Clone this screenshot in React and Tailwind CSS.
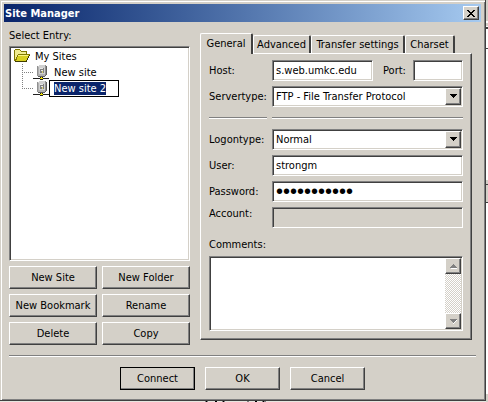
import { useEffect, useRef } from "react";

const sunken =
  "border border-t-[#808080] border-l-[#808080] border-r-white border-b-white shadow-[inset_1px_1px_0_#404040,inset_-1px_-1px_0_#d4d0c8]";
const raised =
  "border border-t-white border-l-white border-r-[#404040] border-b-[#404040] shadow-[inset_-1px_-1px_0_#808080] bg-[#d4d0c8]";
const field = `${sunken} block h-[21px] w-full min-w-0 rounded-none bg-white px-[3px] outline-none`;

function Button({ children, className = "" }) {
  return (
    <button type="button" className={`${raised} h-[23px] text-center leading-[20px] ${className}`}>
      {children}
    </button>
  );
}

function Rule({ className = "" }) {
  return <div className={`h-[2px] border-t border-b border-t-[#808080] border-b-white ${className}`} />;
}

function Arrow({ up = false, color = "#000" }) {
  return (
    <svg width="7" height="5" viewBox="0 0 7 5" shapeRendering="crispEdges" aria-hidden="true">
      {color !== "#000" && (
        <path fill="#fff" d={up ? "M1 4h6v1H1z" : "M6 1h1v1H6zM5 2h1v1H5zM4 3h1v1H4zM3 4h1v1H3z"} />
      )}
      <path
        fill={color}
        d={up ? "M3 0h1v1H3zM2 1h3v1H2zM1 2h5v1H1zM0 3h7v1H0z" : "M0 0h7v1H0zM1 1h5v1H1zM2 2h3v1H2zM3 3h1v1H3z"}
      />
    </svg>
  );
}

function Select({ id, value }) {
  return (
    <div className="relative">
      <select id={id} defaultValue={value} className={`${field} appearance-none pr-5`}>
        <option>{value}</option>
      </select>
      <span className={`${raised} pointer-events-none absolute top-[2px] right-[2px] flex h-[17px] w-4 items-center justify-center`}>
        <Arrow />
      </span>
    </div>
  );
}

function FolderIcon() {
  return (
    <svg width="16" height="16" viewBox="0 0 16 16" shapeRendering="crispEdges" aria-hidden="true">
      <path fill="#807800" d="M1 1h5v1h1v1h6v3h3v1h-1v2h-1v2h-1v2h-1v1H1v-1H0V2h1z" />
      <path fill="#f0ec90" d="M1 2h5v1h1v1h5v2H4v1H3v2H2v2H1z" />
      <path fill="#d8d020" d="M4 7h11v1h-1v2h-1v2h-1v1H2v-1h1V9h1z" />
      <path fill="#f8f480" d="M4 7h10v1H4z" />
      <path fill="#403c00" d="M1 13h11v-1h1v-2h1V8h1V7h1v1h-1v2h-1v2h-1v2H1z" />
    </svg>
  );
}

function ServerIcon() {
  return (
    <svg width="16" height="16" viewBox="0 0 16 16" shapeRendering="crispEdges" aria-hidden="true">
      <path fill="#909090" d="M6 1h7v1h1v9h-1v1h-1v1H5v-1H4V2h2z" />
      <path fill="#d0d0d0" d="M6 1h6v1H6zM5 2h7v10H5z" />
      <path fill="#b0b0b0" d="M5 3h1v9H5zM6 10h6v2H6z" />
      <path fill="#606060" d="M13 2h1v9h-1zM12 11h1v1h-1zM5 12h7v1H5z" />
      <path fill="#808080" d="M7 4h4v5H7z" />
      <path fill="#e8e8e8" d="M7 4h3v1H7zM8 6h2v1H8z" />
      <path fill="#d8d070" d="M9 7h1v2H9z" />
      <path fill="#202020" d="M8 13h1v1H8zM0 14h7v1H0zM10 14h6v1h-6zM7 13h1v1H7zM9 13h1v1H9zM7 15h3v1H7z" />
      <path fill="#f0e000" d="M7 14h3v1H7zM8 13h1v1H8z" />
    </svg>
  );
}

function Branch({ last = false }) {
  return (
    <svg width="11" height="16" viewBox="0 0 11 16" shapeRendering="crispEdges" aria-hidden="true">
      <path
        fill="none"
        stroke="#808080"
        strokeDasharray="1 1"
        d={last ? "M0.5 0V8M0 8.5H11" : "M0.5 0V16M0 8.5H11"}
      />
    </svg>
  );
}

function Tree() {
  const edit = useRef(null);
  useEffect(() => {
    edit.current.focus();
    edit.current.select();
  }, []);
  return (
    <div className={`${sunken} h-[215px] bg-white pt-[1px] pl-1`}>
      <div className="flex h-4 items-center gap-[5px]">
        <FolderIcon />
        <span>My Sites</span>
      </div>
      <ul className="pl-2">
        <li className="flex h-4 items-center">
          <Branch />
          <ServerIcon />
          <span className="pl-[5px]">New site</span>
        </li>
        <li className="flex h-4 items-center">
          <Branch last />
          <ServerIcon />
          <input
            ref={edit}
            aria-label="Entry name"
            defaultValue="New site 2"
            className="h-[17px] w-[70px] shrink-0 border border-black bg-white px-1 outline-none selection:bg-[#0a246a] selection:text-white"
          />
        </li>
      </ul>
    </div>
  );
}

const tab =
  "h-[18px] rounded-t-[2px] border-t border-l border-t-white border-l-white border-r-2 border-r-[#404040] leading-[16px]";

function SettingsTabs() {
  return (
    <div className="min-w-0 flex-1">
      <div role="tablist" className="flex h-5 items-end">
        <button
          type="button"
          role="tab"
          aria-selected="true"
          className="relative z-10 -mb-px h-[21px] w-[53px] rounded-t-[2px] border-t border-r-2 border-l border-t-white border-r-[#404040] border-l-white bg-[#d4d0c8] pb-[2px]"
        >
          General
        </button>
        <button type="button" role="tab" className={`${tab} w-[58px]`}>Advanced</button>
        <button type="button" role="tab" className={`${tab} w-[94px]`}>Transfer settings</button>
        <button type="button" role="tab" className={`${tab} w-[50px]`}>Charset</button>
      </div>
      <div role="tabpanel" className={`${raised} px-2 pt-[6px] pb-2`}>
        <div className="grid grid-cols-[58px_1fr] items-center gap-x-[5px] gap-y-[5px]">
          <label htmlFor="host">Host:</label>
          <div className="flex items-center">
            <input id="host" defaultValue="s.web.umkc.edu" className={`${field} flex-1`} />
            <label htmlFor="port" className="w-10 pl-[10px]">Port:</label>
            <input id="port" className={`${field} max-w-[50px]`} />
          </div>
          <label htmlFor="servertype">Servertype:</label>
          <Select id="servertype" value="FTP - File Transfer Protocol" />
          <Rule className="my-[5px]" />
          <Rule className="my-[5px]" />
          <label htmlFor="logontype">Logontype:</label>
          <Select id="logontype" value="Normal" />
          <label htmlFor="user">User:</label>
          <input id="user" defaultValue="strongm" className={field} />
          <label htmlFor="password">Password:</label>
          <input
            id="password"
            type="password"
            defaultValue="abcdefghijk"
            className={`${field} font-['Liberation_Sans',sans-serif] text-[20px] leading-[17px]`}
          />
          <label htmlFor="account" className="self-start">Account:</label>
          <input id="account" disabled className={`${sunken} h-[21px] w-full bg-[#d4d0c8]`} />
        </div>
        <label htmlFor="comments" className="mt-[10px] mb-[5px] block">Comments:</label>
        <div className={`${sunken} flex h-[75px] bg-white p-[1px]`}>
          <textarea id="comments" className="min-w-0 flex-1 resize-none px-1 outline-none" />
          <div className="flex w-4 flex-col bg-[repeating-conic-gradient(#fff_0%_25%,#d4d0c8_0%_50%)] bg-size-[2px_2px]">
            <button type="button" aria-label="Scroll up" className={`${raised} flex h-4 items-center justify-center`}>
              <Arrow up color="#808080" />
            </button>
            <div className="flex-1" />
            <button type="button" aria-label="Scroll down" className={`${raised} flex h-4 items-center justify-center`}>
              <Arrow color="#808080" />
            </button>
          </div>
        </div>
      </div>
    </div>
  );
}

export default function App() {
  return (
    <div className="flex min-h-screen bg-[#e8e6e0] font-['DejaVu_Sans_Condensed','DejaVu_Sans',sans-serif] text-[11px] leading-[13px] text-black">
      <div className="flex min-w-0 flex-1 flex-col">
        <main className="border-r border-b border-[#404040] bg-[#d4d0c8] shadow-[inset_1px_1px_0_#d4d0c8,inset_2px_2px_0_#fff,inset_-1px_-1px_0_#808080]">
          <div className="px-1 pt-1 pb-[10px]">
            <header className="flex h-[18px] items-center justify-between bg-linear-to-r from-[#0a246a] to-[#a6caf0] pr-[2px] pl-[1px]">
              <h1 className="font-bold text-white">Site Manager</h1>
              <button type="button" aria-label="Close" className={`${raised} flex h-[14px] w-4 items-center justify-center`}>
                <svg width="8" height="7" viewBox="0 0 8 7" shapeRendering="crispEdges" aria-hidden="true">
                  <path d="M0 0h2v1H0zM6 0h2v1H6zM1 1h2v1H1zM5 1h2v1H5zM2 2h4v1H2zM3 3h2v1H3zM2 4h4v1H2zM1 5h2v1H1zM5 5h2v1H5zM0 6h2v1H0zM6 6h2v1H6z" />
                </svg>
              </button>
            </header>
            <div className="flex gap-[10px] pt-[7px] pr-[9px] pl-[5px]">
              <section className="w-[181px] shrink-0">
                <h2 className="mb-1">Select Entry:</h2>
                <Tree />
                <div className="grid grid-cols-2 gap-[5px] pt-[5px]">
                  <Button>New Site</Button>
                  <Button>New Folder</Button>
                  <Button>New Bookmark</Button>
                  <Button>Rename</Button>
                  <Button>Delete</Button>
                  <Button>Copy</Button>
                </div>
              </section>
              <div className="flex min-w-0 flex-1 pt-1">
                <SettingsTabs />
              </div>
            </div>
            <Rule className="mx-[5px] mt-[10px] mb-[10px]" />
            <footer className="flex justify-center gap-[10px]">
              <Button className="w-[75px] border-black! outline outline-black -outline-offset-1">Connect</Button>
              <Button className="w-[75px]">OK</Button>
              <Button className="w-[75px]">Cancel</Button>
            </footer>
          </div>
        </main>
        <svg width="100%" height="1" shapeRendering="crispEdges" aria-hidden="true">
          <path fill="#808080" d="M205 0h3v1h-3zM222 0h3v1h-3zM247 0h2v1h-2zM262 0h4v1h-4z" />
          <path d="M206 0h1v1h-1zM215 0h2v1h-2zM223 0h1v1h-1zM255 0h2v1h-2zM263 0h1v1h-1z" />
        </svg>
      </div>
      <svg width="2" height="402" shapeRendering="crispEdges" aria-hidden="true">
        <path fill="#fff" d="M0 0h2v402H0z" />
        <path fill="#d4d0c8" d="M0 0h2v21H0zM0 23h2v3H0zM0 180h2v22H0zM0 394h2v8H0z" />
        <path fill="#404040" d="M0 27h2v2H0zM0 48h2v1H0zM0 184h2v1H0zM0 202h2v1H0z" />
      </svg>
    </div>
  );
}
